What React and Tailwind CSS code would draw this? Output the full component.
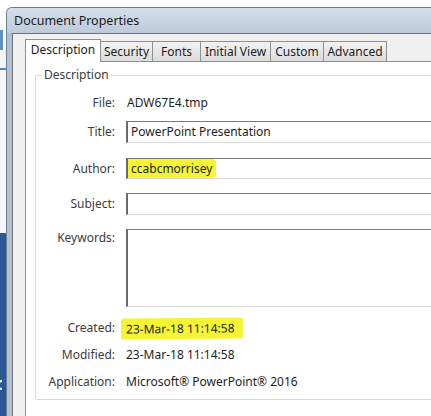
import React from 'react';

const font = { fontFamily: '"Noto Sans", "Open Sans", Arial, sans-serif' };

const tabs = [
  { name: 'Description', w: 'w-[76px]', active: true },
  { name: 'Security', w: 'w-[53px]' },
  { name: 'Fonts', w: 'w-[49px]' },
  { name: 'Initial View', w: 'w-[71px]' },
  { name: 'Custom', w: 'w-[54px]' },
  { name: 'Advanced', w: 'w-[64px]' },
];

const Label = ({ children, top }) => (
  <div className={`w-[79px] shrink-0 text-right text-[#3c3c3c] ${top ? 'self-start pt-[1px]' : ''}`}>
    {children}
  </div>
);

const Box = ({ children, h = 'h-[22px]' }) => (
  <div
    className={`${h} w-[330px] flex items-center pl-[3px] bg-white border border-[#d9d9d9] border-t-[#7a7a7a] border-l-[#6a6a6a] border-l-2`}
  >
    {children}
  </div>
);

const Row = ({ label, mt, h = 'h-[22px]', children }) => (
  <div className={`flex items-center gap-[11px] ${mt} ${h}`}>
    <Label>{label}</Label>
    {children}
  </div>
);

export default function App() {
  return (
    <div className="w-[431px] h-[416px] overflow-hidden flex bg-white text-[12px] leading-4 text-[#1e1e1e]" style={font}>
      {/* whatever lies behind the dialog */}
      <div className="w-[6px] shrink-0 flex flex-col">
        <div className="h-[30px] bg-white" />
        <div className="h-[20px] w-[3px] bg-[#5b8fcc]" />
        <div className="h-[18px] bg-[#f2f5f9]" />
        <div className="h-[2px] bg-[#4f86c6]" />
        <div className="h-[163px] bg-[#f5f7fa]" />
        <div className="flex-1 bg-[#2b579a] flex flex-col">
          <svg className="mt-[145px]" width="6" height="14" viewBox="0 0 6 14">
            <path d="M5 3 A4 4 0 1 0 5 11" fill="none" stroke="#ffffff" strokeWidth="2.2" transform="translate(-3 0)" />
          </svg>
        </div>
      </div>

      <div className="flex-1 min-w-0 flex flex-col">
        <div className="h-[7px] shrink-0" />
        {/* window frame */}
        <div className="flex-1 flex flex-col rounded-tl-[6px] border-l border-t border-[#6f7f96] bg-[#b3c0cf] overflow-hidden">
          <div className="h-[25px] shrink-0 flex items-center pl-[7px] bg-gradient-to-b from-[#d5dfea] to-[#bccada] text-[12.5px] text-[#1a1a1a]">
            Document Properties
          </div>
          <div className="flex-1 flex pl-[5px]">
            <div className="flex-1 flex flex-col border-l border-t border-[#707070] bg-[#f0f0f0] pl-[12px] pt-[5px]">
              {/* tabs */}
              <div className="flex items-end h-[22px] relative z-10">
                {tabs.map((t, i) =>
                  t.active ? (
                    <div
                      key={t.name}
                      className={`${t.w} h-[23px] -mb-px relative z-10 bg-white border border-b-0 border-[#8e8f8f] flex items-center justify-center pb-[2px]`}
                    >
                      {t.name}
                    </div>
                  ) : (
                    <div
                      key={t.name}
                      className={`${t.w} h-[20px] ${i > 0 ? '-ml-px' : ''} bg-gradient-to-b from-[#f2f2f2] to-[#dcdcdc] border border-b-0 border-[#8e8f8f] flex items-center justify-center`}
                    >
                      {t.name}
                    </div>
                  )
                )}
              </div>

              {/* tab panel */}
              <div className="flex-1 w-[480px] bg-white border-l border-t border-[#8e8f8f] pl-[9px] pt-[5px]">
                <fieldset className="w-[460px] border border-[#d8d8d8] rounded-[2px] pb-[6px] m-0 p-0">
                  <legend className="ml-[6px] px-[2px] text-[#3c3c3c] h-4">Description</legend>

                  <Row label="File:" mt="mt-[9px]">
                    <div className="pl-[1px]">ADW67E4.tmp</div>
                  </Row>

                  <Row label="Title:" mt="mt-[7px]">
                    <Box>PowerPoint Presentation</Box>
                  </Row>

                  <Row label="Author:" mt="mt-[15px]" h="h-[21px]">
                    <Box h="h-[21px]">
                      <span className="-ml-[3px] pl-[3px] pr-[4px] h-[19px] flex items-center bg-[#f5f536] rounded-r-[3px]">
                        ccabcmorrisey
                      </span>
                    </Box>
                  </Row>

                  <Row label="Subject:" mt="mt-[14px]">
                    <Box />
                  </Row>

                  <div className="flex gap-[11px] mt-[14px] h-[78px]">
                    <Label top>Keywords:</Label>
                    <div className="h-[78px] w-[330px] bg-white border border-[#d9d9d9] border-t-[#7a7a7a] border-l-2 border-l-[#6a6a6a]" />
                  </div>

                  <Row label="Created:" mt="mt-[10px]">
                    <span className="-ml-[5px] pl-[5px] pr-[8px] h-[21px] flex items-center bg-[#f5f536] rounded-[3px] -rotate-[0.6deg]">
                      23-Mar-18 11:14:58
                    </span>
                  </Row>

                  <Row label="Modified:" mt="mt-[5px]">
                    <div>23-Mar-18 11:14:58</div>
                  </Row>

                  <Row label="Application:" mt="mt-[5px]">
                    <div>Microsoft® PowerPoint® 2016</div>
                  </Row>
                </fieldset>
              </div>
            </div>
          </div>
        </div>
      </div>
    </div>
  );
}
